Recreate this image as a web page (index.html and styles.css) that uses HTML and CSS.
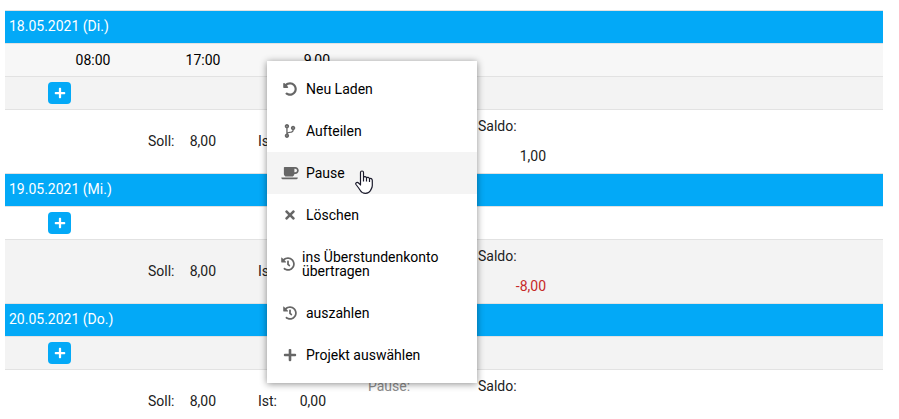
FILE: index.html
```
<!DOCTYPE html>
<html lang="de">
<head>
<meta charset="utf-8">
<title>Zeiterfassung</title>
<link rel="stylesheet" href="styles.css">
</head>
<body>
<svg class="sprite" aria-hidden="true">
  <symbol id="plus" viewBox="0 0 448 512"><path d="M416 208H272V64c0-17.67-14.33-32-32-32h-32c-17.67 0-32 14.33-32 32v144H32c-17.67 0-32 14.33-32 32v32c0 17.67 14.33 32 32 32h144v144c0 17.67 14.33 32 32 32h32c17.67 0 32-14.33 32-32V304h144c17.67 0 32-14.33 32-32v-32c0-17.67-14.33-32-32-32z"/></symbol>
  <symbol id="times" viewBox="0 0 352 512"><path d="M242.72 256l100.07-100.07c12.28-12.28 12.28-32.19 0-44.48l-22.24-22.24c-12.28-12.28-32.19-12.28-44.48 0L176 189.28 75.93 89.21c-12.28-12.28-32.19-12.28-44.48 0L9.21 111.45c-12.28 12.28-12.28 32.19 0 44.48L109.28 256 9.21 356.07c-12.28 12.28-12.28 32.19 0 44.48l22.24 22.24c12.28 12.28 32.2 12.28 44.48 0L176 322.72l100.07 100.07c12.28 12.28 32.2 12.28 44.48 0l22.24-22.24c12.28-12.28 12.28-32.19 0-44.48L242.72 256z"/></symbol>
  <symbol id="coffee" viewBox="0 0 640 512"><path d="M192 384h192c53 0 96-43 96-96h32c70.6 0 128-57.4 128-128S582.6 32 512 32H120c-13.3 0-24 10.7-24 24v232c0 53 43 96 96 96zM512 96c35.3 0 64 28.7 64 64s-28.7 64-64 64h-32V96h32zm47.7 384H48.3c-47.6 0-61-64-36-64h583.3c25 0 11.8 64-35.9 64z"/></symbol>
  <symbol id="branch" viewBox="0 0 384 512"><path d="M384 144c0-44.2-35.8-80-80-80s-80 35.8-80 80c0 36.4 24.3 67.1 57.5 76.8-.6 16.1-4.2 28.5-11 36.9-15.4 19.2-49.3 22.4-85.2 25.7-28.2 2.6-57.4 5.4-81.3 16.9v-144c32.5-10.2 56-40.5 56-76.3 0-44.2-35.8-80-80-80S0 35.8 0 80c0 35.8 23.5 66.1 56 76.3v199.3C23.5 365.9 0 396.2 0 432c0 44.2 35.8 80 80 80s80-35.8 80-80c0-34-21.2-63.1-51.2-74.6 3.1-5.2 7.8-9.8 14.9-13.4 16.2-8.2 40.4-10.4 66.1-12.8 42.2-3.9 90-8.4 118.2-43.4 14-17.4 21.1-39.8 21.6-67.9 31.6-10.8 54.4-40.7 54.4-75.9zM80 64c8.8 0 16 7.2 16 16s-7.2 16-16 16-16-7.2-16-16 7.2-16 16-16zm0 384c-8.8 0-16-7.2-16-16s7.2-16 16-16 16 7.2 16 16-7.2 16-16 16zm224-320c8.8 0 16 7.2 16 16s-7.2 16-16 16-16-7.2-16-16 7.2-16 16-16z"/></symbol>
  <symbol id="history" viewBox="0 0 512 512"><path d="M504 255.531c.253 136.64-111.18 248.372-247.82 248.468-59.015.042-113.223-20.53-155.822-54.911-11.077-8.94-11.905-25.541-1.839-35.607l11.267-11.267c8.609-8.609 22.353-9.551 31.891-1.984C173.062 425.135 212.781 440 256 440c101.705 0 184-82.311 184-184 0-101.705-82.311-184-184-184-48.814 0-93.149 18.969-126.068 49.932l50.754 50.754c10.08 10.08 2.941 27.314-11.313 27.314H24c-8.837 0-16-7.163-16-16V38.627c0-14.254 17.234-21.393 27.314-11.314l49.372 49.372C129.209 34.136 189.552 8 256 8c136.81 0 247.747 110.78 248 247.531zm-180.912 78.784l9.823-12.63c8.138-10.463 6.253-25.542-4.21-33.679L288 256.349V152c0-13.255-10.745-24-24-24h-16c-13.255 0-24 10.745-24 24v135.651l65.409 50.874c10.463 8.137 25.541 6.253 33.679-4.21z"/></symbol>
  <symbol id="undo" viewBox="0 0 512 512"><path d="M255.545 8c-66.269.119-126.438 26.233-170.86 68.685L48.971 40.971C33.851 25.851 8 36.559 8 57.941V192c0 13.255 10.745 24 24 24h134.059c21.382 0 32.09-25.851 16.971-40.971l-41.75-41.75c30.864-28.899 70.801-44.907 113.23-45.273 92.398-.798 170.283 73.977 169.484 169.442C423.236 348.009 349.816 424 256 424c-41.127 0-79.997-14.678-110.63-41.556-4.743-4.161-11.906-3.908-16.368.553L89.34 422.659c-4.872 4.872-4.631 12.815.482 17.433C133.798 479.813 192.074 504 256 504c136.966 0 247.999-111.033 248-247.998C504.001 119.193 392.354 7.755 255.545 8z"/></symbol>
</svg>

<table class="sheet">
  <colgroup>
    <col class="col-lead"><col class="col"><col class="col"><col class="col"><col class="col"><col>
  </colgroup>
  <tbody>
    <tr class="day"><th colspan="6" scope="rowgroup">18.05.2021 (Di.)</th></tr>
    <tr class="entry">
      <td></td><td class="time">08:00</td><td class="time">17:00</td><td class="hours">9,00</td><td></td><td></td>
    </tr>
    <tr class="add shaded">
      <td></td>
      <td colspan="5"><button class="plus" type="button" aria-label="Hinzufügen"><svg class="icon"><use href="#plus"/></svg></button></td>
    </tr>
    <tr class="total">
      <td></td><td></td>
      <td><div class="pair"><span>Soll:</span><span>8,00</span></div></td>
      <td><div class="pair"><span>Ist:</span></div></td>
      <td></td>
      <td><div class="stack"><span>Saldo:</span><span class="amount">1,00</span></div></td>
    </tr>
  </tbody>
  <tbody>
    <tr class="day"><th colspan="6" scope="rowgroup">19.05.2021 (Mi.)</th></tr>
    <tr class="add">
      <td></td>
      <td colspan="5"><button class="plus" type="button" aria-label="Hinzufügen"><svg class="icon"><use href="#plus"/></svg></button></td>
    </tr>
    <tr class="total shaded">
      <td></td><td></td>
      <td><div class="pair"><span>Soll:</span><span>8,00</span></div></td>
      <td><div class="pair"><span>Ist:</span></div></td>
      <td></td>
      <td><div class="stack"><span>Saldo:</span><span class="amount negative">-8,00</span></div></td>
    </tr>
  </tbody>
  <tbody>
    <tr class="day"><th colspan="6" scope="rowgroup">20.05.2021 (Do.)</th></tr>
    <tr class="add shaded">
      <td></td>
      <td colspan="5"><button class="plus" type="button" aria-label="Hinzufügen"><svg class="icon"><use href="#plus"/></svg></button></td>
    </tr>
    <tr class="total">
      <td></td><td></td>
      <td><div class="pair"><span>Soll:</span><span>8,00</span></div></td>
      <td><div class="pair"><span>Ist:</span><span>0,00</span></div></td>
      <td><div class="stack muted"><span>Pause:</span></div></td>
      <td><div class="stack"><span>Saldo:</span></div></td>
    </tr>
  </tbody>
</table>

<div class="menu" role="menu">
  <button class="item" type="button" role="menuitem"><svg class="icon"><use href="#undo"/></svg><span>Neu Laden</span></button>
  <button class="item" type="button" role="menuitem"><svg class="icon"><use href="#branch"/></svg><span>Aufteilen</span></button>
  <button class="item active" type="button" role="menuitem"><svg class="icon"><use href="#coffee"/></svg><span>Pause</span></button>
  <button class="item" type="button" role="menuitem"><svg class="icon"><use href="#times"/></svg><span>Löschen</span></button>
  <button class="item narrow" type="button" role="menuitem"><svg class="icon"><use href="#history"/></svg><span>ins Überstundenkonto übertragen</span></button>
  <button class="item" type="button" role="menuitem"><svg class="icon"><use href="#history"/></svg><span>auszahlen</span></button>
  <button class="item" type="button" role="menuitem"><svg class="icon"><use href="#plus"/></svg><span>Projekt auswählen</span></button>
  <svg class="pointer" viewBox="0 0 18 24" aria-hidden="true"><path d="M5.500 15V2.500a1.500 1.500 0 0 1 3 0V7.500C9 6.200 11.200 6.300 11.500 8C12.200 6.900 14.200 7.200 14.500 8.800C15.500 8 17.300 8.500 17.300 10.500V15.500C17.300 18 16 19 15.500 20.500C14.500 22.500 13 23.300 10.500 23.300C8 23.300 6.500 22.600 5.500 20.800C4.200 18.700 3 17 1 14.500C.2 13.300 1.500 12 3 12.600C4 13 4.600 13.800 5.500 15zM8.500 7.500V11.500M11.500 8V11.500M14.500 9V12"/></svg>
</div>
</body>
</html>
```
FILE: styles.css
```
body {
  margin: 10px 16px 0 5px;
  background: #fff;
  color: #212121;
  font: 14px/30px Roboto, sans-serif;
  overflow: hidden;
}

.sprite {
  display: none;
}

.icon {
  display: block;
  fill: currentColor;
}

.sheet {
  width: 100%;
  table-layout: fixed;
  border-spacing: 0;
  border-top: 1px solid #e2e2e2;
}

.col-lead {
  width: 33px;
}

.col {
  width: 110px;
}

.sheet td,
.sheet th {
  height: 32px;
  padding: 0;
  border-bottom: 1px solid #e2e2e2;
}

.sheet .day th {
  padding: 0 4px;
  background: #03a9f7;
  color: #fff;
  font-weight: 400;
  text-align: left;
  vertical-align: top;
}

.entry td {
  background: #f7f7f7;
  color: #000;
}

.sheet .shaded td {
  background: #f3f3f3;
}

.time {
  text-align: center;
}

.sheet .hours {
  padding-right: 38px;
  text-align: right;
}

.sheet .total td {
  height: 62px;
  padding-top: 1px;
  vertical-align: top;
}

.plus {
  display: flex;
  align-items: center;
  justify-content: center;
  width: 23px;
  height: 22px;
  margin-left: 10px;
  padding: 0;
  border: 0;
  border-radius: 4px;
  background: #03a9f7;
  color: #fff;
}

.plus .icon {
  width: 12px;
  height: 12px;
}

.pair {
  display: flex;
  align-items: center;
  justify-content: space-between;
  width: 68px;
  height: 60px;
}

.stack {
  display: flex;
  flex-direction: column;
  width: 68px;
  height: 60px;
}

.amount {
  text-align: right;
}

.negative {
  color: #c62828;
}

.muted {
  color: #8c8c8c;
}

.menu {
  position: absolute;
  top: 61px;
  left: 267px;
  width: 210px;
  padding: 7px 0;
  box-sizing: border-box;
  background: #fff;
  box-shadow: 0 1px 7px rgba(0, 0, 0, .45);
}

.item {
  display: flex;
  align-items: center;
  gap: 7px;
  width: 100%;
  padding: 14px;
  border: 0;
  background: none;
  color: #000;
  font: inherit;
  line-height: 14px;
  text-align: left;
}

.item .icon {
  flex: none;
  width: 18px;
  height: 14px;
  color: #666;
}

.item.narrow .icon {
  width: 14px;
}

.item.active {
  background: #f4f4f4;
}

.pointer {
  position: absolute;
  top: 109px;
  left: 88px;
  width: 18px;
  height: 24px;
  fill: #fff;
  stroke: #1a1a2b;
  stroke-width: 1.2;
  stroke-linejoin: round;
}
```
